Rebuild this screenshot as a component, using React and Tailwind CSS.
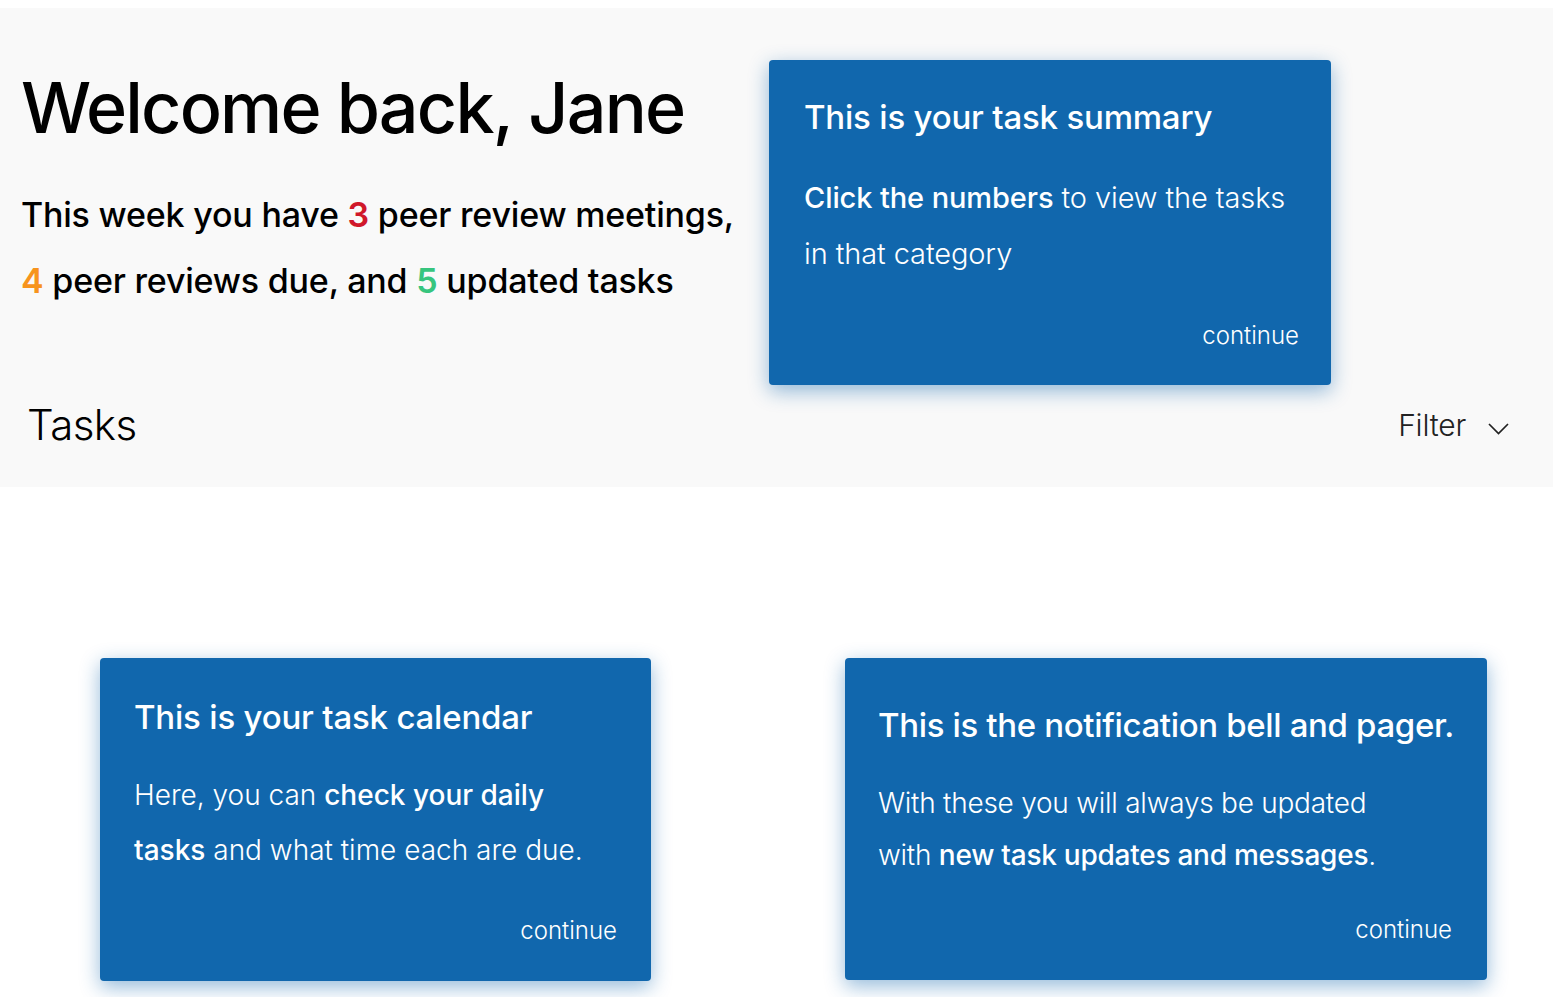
const font = { fontFamily: 'Inter, "Noto Sans", sans-serif' }

function TourCard({ className, title, titleClass = 'tracking-[-0.2px]', children }) {
    return (
        <div className={`bg-[#1167ad] rounded-[4px] text-white shadow-[0_6px_20px_rgba(17,103,173,0.45)] flex flex-col ${className}`}>
            <h3 className={`text-[33px] font-medium leading-none whitespace-nowrap ${titleClass}`}>{title}</h3>
            {children}
        </div>
    )
}

export default function App() {
    return (
        <div className="w-[1567px] h-[997px] bg-white overflow-hidden text-black" style={font}>
            {/* header band */}
            <div className="mt-[8px] w-[1553px] h-[479px] bg-[#f9f9f9] flex flex-col">
                <div className="flex">
                    <div className="pl-[21px] pt-[65px] w-[769px] shrink-0">
                        <h1 className="text-[70px] font-medium tracking-[-1.8px] leading-none">Welcome back, Jane</h1>
                        <p className="mt-[39px] text-[34px] font-medium leading-[66px] tracking-[-0.2px] whitespace-nowrap">
                            This week you have <span className="text-[#d0182a] font-semibold">3</span> peer review meetings,
                            <br />
                            <span className="text-[#f7941d] font-semibold">4</span> peer reviews due, and <span className="text-[#37c57e] font-semibold">5</span> updated tasks
                        </p>
                    </div>
                    <TourCard className="mt-[52px] w-[562px] h-[325px] pl-[35px] pr-[32px] pt-[41px]" title="This is your task summary">
                        <p className="mt-[36px] text-[29px] leading-[56px] font-light tracking-[-0.1px]">
                            <span className="font-medium">Click the numbers</span> to view the tasks
                            <br />
                            in that category
                        </p>
                        <span className="mt-auto mb-[37px] self-end text-[24px] font-light leading-none">continue</span>
                    </TourCard>
                </div>
                <div className="flex items-center justify-between pl-[27px] pr-[44px] mt-[16px]">
                    <h2 className="text-[42px] font-light leading-none tracking-[-0.5px]">Tasks</h2>
                    <div className="flex items-center gap-[22px] mt-[2px]">
                        <span className="text-[30px] font-light text-[#222] tracking-[-0.2px]">Filter</span>
                        <svg width="21" height="12" viewBox="0 0 21 12" className="mt-[6px]">
                            <polyline points="1,1 10.5,10.5 20,1" fill="none" stroke="#222" strokeWidth="1.7" />
                        </svg>
                    </div>
                </div>
            </div>

            {/* tour cards */}
            <div className="flex pt-[171px]">
                <TourCard className="ml-[100px] w-[551px] h-[323px] pl-[34px] pr-[34px] pt-[43px]" title="This is your task calendar">
                    <p className="mt-[34px] text-[28px] leading-[55px] font-light">
                        Here, you can <span className="font-medium">check your daily</span>
                        <br />
                        <span className="font-medium">tasks</span> and what time each are due.
                    </p>
                    <span className="mt-auto mb-[38px] self-end text-[24px] font-light leading-none">continue</span>
                </TourCard>
                <TourCard
                    className="ml-[194px] w-[642px] h-[322px] pl-[33px] pr-[35px] pt-[51px]"
                    titleClass="tracking-[-0.35px]"
                    title="This is the notification bell and pager."
                >
                    <p className="mt-[35px] text-[28px] leading-[52px] font-light tracking-[-0.25px] whitespace-nowrap">
                        With these you will always be updated
                        <br />
                        with <span className="font-medium">new task updates and messages</span>.
                    </p>
                    <span className="mt-auto mb-[38px] self-end text-[24px] font-light leading-none">continue</span>
                </TourCard>
            </div>
        </div>
    )
}
